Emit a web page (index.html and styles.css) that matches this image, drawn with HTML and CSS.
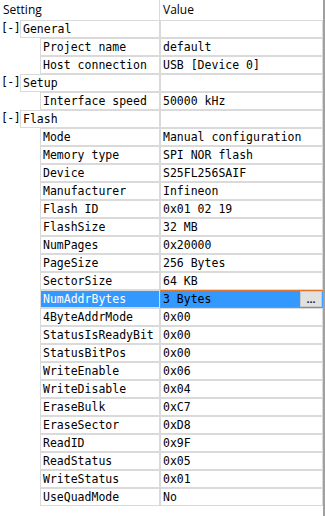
FILE: index.html
```html
<!DOCTYPE html>
<html>
<head>
    <link rel="stylesheet" href="styles.css">
</head>
<body>

<div class="grid">
    <div class="head">
        <div class="head-set">Setting</div>
        <div class="head-val">Value</div>
    </div>

    <div class="row group"><span class="toggle">[-]</span><div class="name">General</div><div class="val"></div></div>
    <div class="row child"><div class="name">Project name</div><div class="val">default</div></div>
    <div class="row child"><div class="name">Host connection</div><div class="val">USB [Device 0]</div></div>

    <div class="row group"><span class="toggle">[-]</span><div class="name">Setup</div><div class="val"></div></div>
    <div class="row child"><div class="name">Interface speed</div><div class="val">50000 kHz</div></div>

    <div class="row group"><span class="toggle">[-]</span><div class="name">Flash</div><div class="val"></div></div>
    <div class="row child"><div class="name">Mode</div><div class="val">Manual configuration</div></div>
    <div class="row child"><div class="name">Memory type</div><div class="val">SPI NOR flash</div></div>
    <div class="row child"><div class="name">Device</div><div class="val">S25FL256SAIF</div></div>
    <div class="row child"><div class="name">Manufacturer</div><div class="val">Infineon</div></div>
    <div class="row child"><div class="name">Flash ID</div><div class="val">0x01 02 19</div></div>
    <div class="row child"><div class="name">FlashSize</div><div class="val">32 MB</div></div>
    <div class="row child"><div class="name">NumPages</div><div class="val">0x20000</div></div>
    <div class="row child"><div class="name">PageSize</div><div class="val">256 Bytes</div></div>
    <div class="row child"><div class="name">SectorSize</div><div class="val">64 KB</div></div>
    <div class="row child selected"><div class="name">NumAddrBytes</div><div class="val">3 Bytes<span class="more">...</span></div></div>
    <div class="row child"><div class="name">4ByteAddrMode</div><div class="val">0x00</div></div>
    <div class="row child"><div class="name">StatusIsReadyBit</div><div class="val">0x00</div></div>
    <div class="row child"><div class="name">StatusBitPos</div><div class="val">0x00</div></div>
    <div class="row child"><div class="name">WriteEnable</div><div class="val">0x06</div></div>
    <div class="row child"><div class="name">WriteDisable</div><div class="val">0x04</div></div>
    <div class="row child"><div class="name">EraseBulk</div><div class="val">0xC7</div></div>
    <div class="row child"><div class="name">EraseSector</div><div class="val">0xD8</div></div>
    <div class="row child"><div class="name">ReadID</div><div class="val">0x9F</div></div>
    <div class="row child"><div class="name">ReadStatus</div><div class="val">0x05</div></div>
    <div class="row child"><div class="name">WriteStatus</div><div class="val">0x01</div></div>
    <div class="row child"><div class="name">UseQuadMode</div><div class="val">No</div></div>
</div>

</body>
</html>
```

FILE: styles.css
```css
* {
    box-sizing: border-box;
}
body {
    margin: 0;
    padding: 0;
    background-color: #fff;
}
.grid {
    width: 325px;
    height: 516px;
    border-right: 2px solid #a0a0a0;
    font-family: "DejaVu Sans Mono", monospace;
    font-size: 11.5px;
    color: #000;
}
.head {
    display: flex;
    height: 20px;
    font-family: "Open Sans", sans-serif;
    font-size: 12px;
    line-height: 20px;
}
.head-set {
    width: 160px;
    padding-left: 3px;
    border-right: 1px solid #dadada;
}
.head-val {
    padding-left: 3px;
}
.row {
    display: flex;
    height: 18px;
    line-height: 17px;
    white-space: nowrap;
}
.toggle {
    width: 20px;
    padding-left: 1px;
    letter-spacing: -0.6px;
}
.child {
    padding-left: 40px;
}
.name {
    flex: 1;
    padding-left: 2px;
    border: 1px solid #dadada;
    overflow: hidden;
}
.val {
    position: relative;
    width: 163px;
    padding-left: 2px;
    border: 1px solid #dadada;
}
.selected .name {
    background-color: #3399ff;
    color: #fff;
}
.selected .val {
    background-color: #3399ff;
    border: 1px dotted #e8803a;
}
.more {
    position: absolute;
    right: 0;
    top: 0;
    width: 22px;
    height: 16px;
    background-color: #e1e1e1;
    border: 1px solid #c8c8c8;
    font-family: "Liberation Sans", sans-serif;
    font-weight: bold;
    font-size: 11px;
    line-height: 15px;
    text-align: center;
    color: #202040;
}
```
